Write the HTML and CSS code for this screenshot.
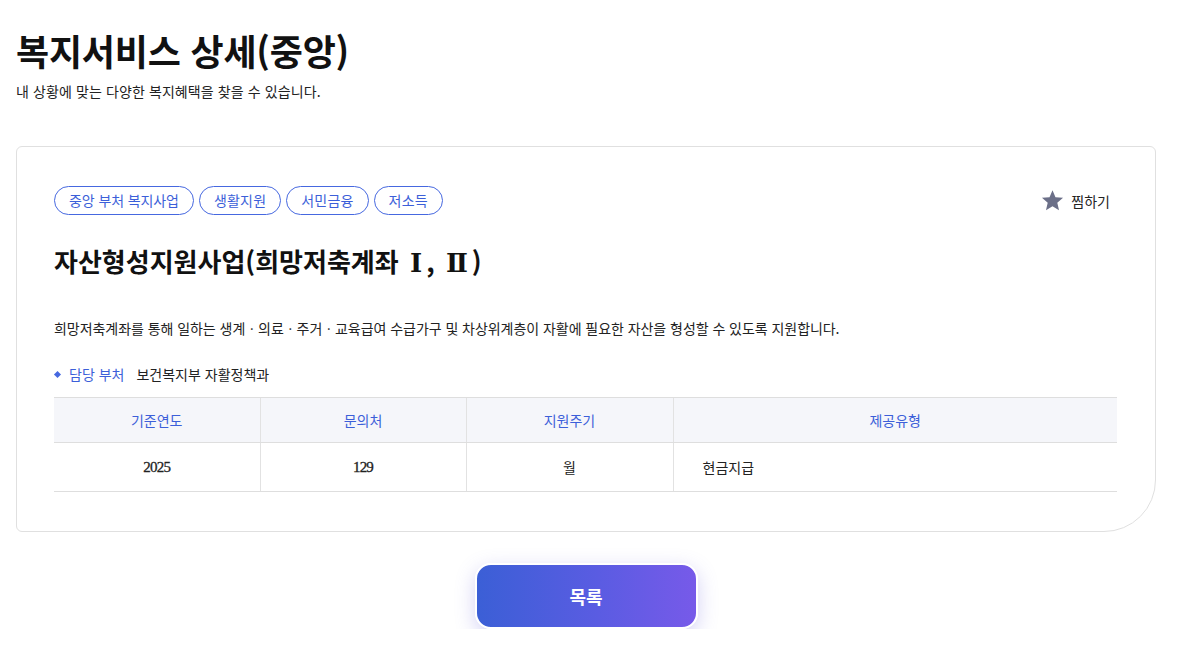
FILE: index.html
```html
<!DOCTYPE html>
<html lang="ko">
<head>
<meta charset="utf-8">
<title>복지서비스 상세(중앙)</title>
<link rel="stylesheet" href="styles.css">
</head>
<body>
<div class="page">
  <header class="page-head">
    <h1 class="page-title">복지서비스 상세(중앙)</h1>
    <p class="page-sub">내 상황에 맞는 다양한 복지혜택을 찾을 수 있습니다.</p>
  </header>

  <section class="card">
    <div class="card-top">
      <ul class="tags">
        <li class="tag tag-wide">중앙 부처 복지사업</li>
        <li class="tag">생활지원</li>
        <li class="tag">서민금융</li>
        <li class="tag">저소득</li>
      </ul>
      <button class="fav" type="button">
        <svg class="star" viewBox="0 0 24 24" width="23" height="23" aria-hidden="true"><path d="M12 1.2l3.1 7.3 7.9.7-6 5.2 1.8 7.8L12 18.1l-6.8 4.1L7 14.4l-6-5.2 7.9-.7z" fill="#6b6f88"/></svg>
        <span>찜하기</span>
      </button>
    </div>
    <h2 class="svc-title">자산형성지원사업(희망저축계좌 <span class="roman">Ⅰ</span>, <span class="roman">Ⅱ</span>)</h2>
    <p class="svc-desc">희망저축계좌를 통해 일하는 생계ㆍ의료ㆍ주거ㆍ교육급여 수급가구 및 차상위계층이 자활에 필요한 자산을 형성할 수 있도록 지원합니다.</p>
    <div class="dept">
      <span class="dept-label">담당 부처</span>
      <span class="dept-value">보건복지부 자활정책과</span>
    </div>
    <table class="info">
      <thead>
        <tr>
          <th class="c1">기준연도</th>
          <th class="c2">문의처</th>
          <th class="c3">지원주기</th>
          <th class="c4">제공유형</th>
        </tr>
      </thead>
      <tbody>
        <tr>
          <td class="num">2025</td>
          <td class="num">129</td>
          <td>월</td>
          <td class="left">현금지급</td>
        </tr>
      </tbody>
    </table>
  </section>

  <div class="actions">
    <button class="btn-list" type="button">목록</button>
  </div>
</div>
</body>
</html>
```

FILE: styles.css
```css
* { box-sizing: border-box; }
html, body { margin: 0; padding: 0; background: #fff; }
body {
  font-family: "Noto Sans CJK KR", "Noto Sans", sans-serif;
  color: #222;
}
.page {
  width: 1140px;
  margin-left: 16px;
}
.page-head { padding-top: 26px; }
.page-title {
  margin: 0;
  font-size: 36px;
  line-height: 48px;
  font-weight: 700;
  color: #111;
  letter-spacing: -0.2px;
}
.page-sub {
  margin: 7px 0 0;
  font-size: 14px;
  line-height: 20px;
  color: #222;
  letter-spacing: 0.1px;
}
.card {
  margin-top: 45px;
  border: 1px solid #e0e0e0;
  border-radius: 6px 6px 52px 6px;
  padding: 39px 38px 39px 37px;
}
.card-top {
  display: flex;
  justify-content: space-between;
  align-items: center;
}
.tags {
  display: flex;
  gap: 5px;
  list-style: none;
  margin: 0;
  padding: 0;
}
.tag {
  height: 29px;
  padding: 0 14px;
  border: 1px solid #4668e0;
  border-radius: 15px;
  color: #3c5fd9;
  font-size: 14px;
  line-height: 27px;
  letter-spacing: 0.2px;
}
.tag-wide {
  letter-spacing: -0.1px;
}
.fav {
  display: flex;
  align-items: center;
  gap: 7px;
  border: 0;
  background: none;
  padding: 0;
  margin-right: 7px;
  font-family: inherit;
  font-size: 14px;
  color: #222;
  cursor: pointer;
}
.svc-title {
  margin: 28px 0 0;
  font-size: 26px;
  line-height: 36px;
  font-weight: 700;
  color: #111;
  letter-spacing: 0;
}
.roman {
  font-family: "DejaVu Serif", "Liberation Serif", serif;
  font-weight: 700;
  padding: 0 4px;
}
.svc-desc {
  margin: 37px 0 0;
  font-size: 14px;
  line-height: 20px;
  color: #222;
  letter-spacing: -0.05px;
}
.dept {
  margin-top: 26px;
  display: flex;
  align-items: center;
  font-size: 14px;
  line-height: 20px;
  letter-spacing: 0;
}
.dept-label {
  position: relative;
  padding-left: 15px;
  color: #3c5fd9;
  margin-right: 12px;
}
.dept-label::before {
  content: "";
  position: absolute;
  left: 1px;
  top: 8px;
  width: 5px;
  height: 5px;
  background: #4668e0;
  transform: rotate(45deg);
}
.dept-value { color: #222; }
.info {
  margin-top: 13px;
  width: 100%;
  border-collapse: collapse;
  font-size: 14px;
}
.info th {
  background: #f5f6fa;
  color: #3c5fd9;
  font-weight: 400;
  height: 45px;
  border-top: 1px solid #dedede;
  border-bottom: 1px solid #dedede;
}
.info th + th, .info td + td { border-left: 1px solid #e2e2e2; }
.info .c1 { width: 206px; }
.info .c2 { width: 206px; }
.info .c3 { width: 207px; }
.info td {
  height: 49px;
  text-align: center;
  border-bottom: 1px solid #dedede;
  color: #222;
}
.info td.num {
  font-family: "Liberation Serif", "Noto Sans CJK KR", serif;
  font-size: 15px;
  font-weight: 400;
  letter-spacing: -0.8px;
  -webkit-text-stroke: 0.3px #222;
}
.info td.left {
  text-align: left;
  padding-left: 29px;
}
.actions {
  display: flex;
  justify-content: center;
  margin-top: 31px;
}
.btn-list {
  width: 223px;
  height: 66px;
  border: 2px solid #fff;
  border-radius: 16px;
  background: linear-gradient(90deg, #3b5fd6 0%, #5a5ce2 55%, #775ae9 100%);
  color: #fff;
  font-family: inherit;
  font-size: 18px;
  font-weight: 700;
  box-shadow: 0 6px 20px rgba(100, 95, 220, 0.28);
  cursor: pointer;
}
```
